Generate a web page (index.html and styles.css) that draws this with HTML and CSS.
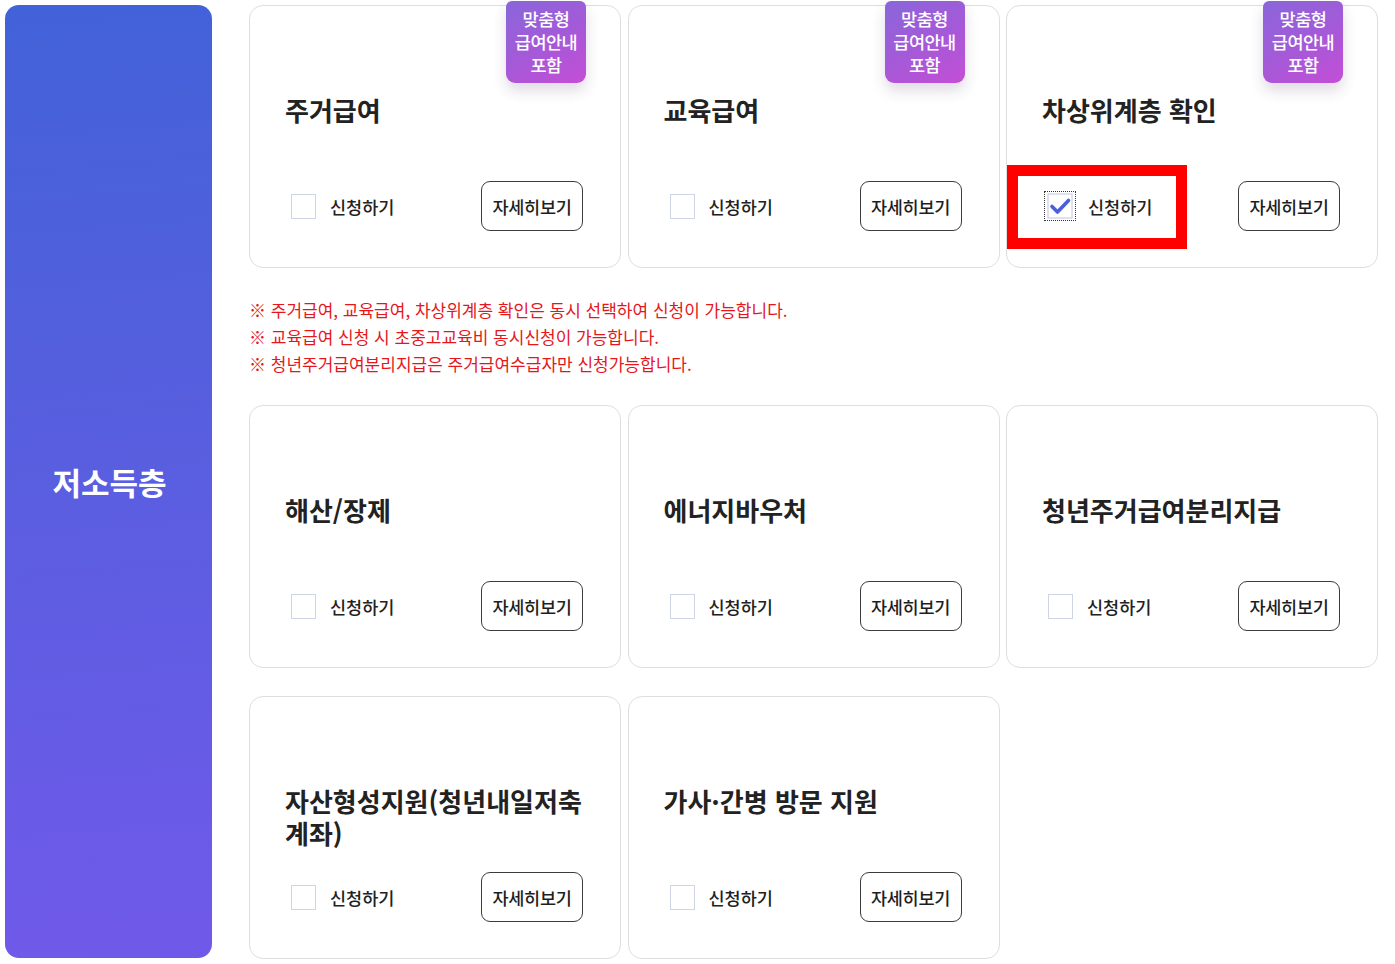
FILE: index.html
```html
<!DOCTYPE html>
<html lang="ko">
<head>
<meta charset="utf-8">
<title>저소득층</title>
<link rel="stylesheet" href="styles.css">
</head>
<body>
<div class="page">
  <aside class="side"><span class="side-label">저소득층</span></aside>
  <main class="main">
    <section class="grid">
      <div class="card">
        <div class="badge">맞춤형<br>급여안내<br>포함</div>
        <h3 class="title">주거급여</h3>
        <div class="actions">
          <label class="apply"><span class="box"></span><span class="apply-text">신청하기</span></label>
          <button class="more">자세히보기</button>
        </div>
      </div>
      <div class="card">
        <div class="badge">맞춤형<br>급여안내<br>포함</div>
        <h3 class="title">교육급여</h3>
        <div class="actions">
          <label class="apply"><span class="box"></span><span class="apply-text">신청하기</span></label>
          <button class="more">자세히보기</button>
        </div>
      </div>
      <div class="card">
        <div class="badge">맞춤형<br>급여안내<br>포함</div>
        <h3 class="title">차상위계층 확인</h3>
        <div class="actions">
          <label class="apply checked">
            <span class="box box-checked">
              <svg viewBox="0 0 32 30" width="32" height="30">
                <rect x="4" y="3" width="24" height="24" fill="#fff" stroke="#d4d8ec" stroke-width="1.5"/>
                <path d="M8 15.5 L13.5 21 L24.5 9.5" fill="none" stroke="#4a5fd8" stroke-width="3.6" stroke-linecap="round" stroke-linejoin="round"/>
              </svg>
            </span>
            <span class="apply-text">신청하기</span>
          </label>
          <button class="more">자세히보기</button>
        </div>
        <div class="highlight"></div>
      </div>
    </section>

    <div class="notes">
      <p>※ 주거급여, 교육급여, 차상위계층 확인은 동시 선택하여 신청이 가능합니다.</p>
      <p>※ 교육급여 신청 시 초중고교육비 동시신청이 가능합니다.</p>
      <p>※ 청년주거급여분리지급은 주거급여수급자만 신청가능합니다.</p>
    </div>

    <section class="grid grid-lower">
      <div class="card">
        <h3 class="title">해산/장제</h3>
        <div class="actions">
          <label class="apply"><span class="box"></span><span class="apply-text">신청하기</span></label>
          <button class="more">자세히보기</button>
        </div>
      </div>
      <div class="card">
        <h3 class="title">에너지바우처</h3>
        <div class="actions">
          <label class="apply"><span class="box"></span><span class="apply-text">신청하기</span></label>
          <button class="more">자세히보기</button>
        </div>
      </div>
      <div class="card">
        <h3 class="title">청년주거급여분리지급</h3>
        <div class="actions">
          <label class="apply"><span class="box"></span><span class="apply-text">신청하기</span></label>
          <button class="more">자세히보기</button>
        </div>
      </div>
      <div class="card">
        <h3 class="title">자산형성지원(청년내일저축 계좌)</h3>
        <div class="actions">
          <label class="apply"><span class="box"></span><span class="apply-text">신청하기</span></label>
          <button class="more">자세히보기</button>
        </div>
      </div>
      <div class="card">
        <h3 class="title">가사·간병 방문 지원</h3>
        <div class="actions">
          <label class="apply"><span class="box"></span><span class="apply-text">신청하기</span></label>
          <button class="more">자세히보기</button>
        </div>
      </div>
    </section>
  </main>
</div>
</body>
</html>
```
FILE: styles.css
```css
* { box-sizing: border-box; }
html, body {
  margin: 0;
  padding: 0;
  background: #fff;
}
body {
  font-family: "Noto Sans CJK KR", "Noto Sans", sans-serif;
  color: #222;
  overflow: hidden;
}
.page {
  display: flex;
  align-items: flex-start;
  padding: 5px 0 0 5px;
  height: 964px;
}
.side {
  width: 207px;
  height: 953px;
  border-radius: 14px;
  background: linear-gradient(175deg, #4262d8 0%, #5a5ee0 50%, #7059ea 100%);
  display: flex;
  align-items: center;
  justify-content: center;
  flex-shrink: 0;
}
.side-label {
  color: #fff;
  font-size: 31px;
  font-weight: 700;
  margin-left: 2px;
}
.main {
  margin-left: 37px;
  width: 1129px;
}
.grid {
  display: grid;
  grid-template-columns: repeat(3, 372px);
  column-gap: 6.5px;
  grid-auto-rows: 263px;
}
.grid-lower {
  row-gap: 28px;
  grid-auto-rows: 263px;
}
.card {
  position: relative;
  border: 1.5px solid #dedede;
  border-radius: 14px;
  background: #fff;
  display: flex;
  flex-direction: column;
  padding: 0 37px 36px 35px;
}
.badge {
  position: absolute;
  top: -5px;
  right: 34px;
  width: 80px;
  height: 82px;
  border-radius: 6px 6px 9px 9px;
  background: linear-gradient(150deg, #8a66da 0%, #a35ad8 50%, #c44ed6 100%);
  color: #fff;
  font-size: 17.5px;
  line-height: 23px;
  font-weight: 500;
  text-align: center;
  padding-top: 6px;
  letter-spacing: -0.5px;
  box-shadow: 0 8px 14px rgba(60, 40, 90, 0.16);
}
.title {
  margin: 0;
  padding-top: 88px;
  font-size: 26px;
  line-height: 32px;
  font-weight: 700;
  color: #222;
}
.actions {
  margin-top: auto;
  display: flex;
  align-items: center;
  justify-content: space-between;
}
.apply {
  display: flex;
  align-items: center;
  padding-left: 6px;
}
.box {
  width: 25px;
  height: 25px;
  border: 1.5px solid #cfd5e6;
  background: #fff;
  display: block;
}
.box-checked {
  border: 1.5px dotted #333;
  width: 32px;
  height: 30px;
  padding: 0;
}
.box-checked svg { display: block; margin: -1.5px; }
.checked { padding-left: 2px; }
.checked .apply-text { margin-left: 12px; }
.apply-text {
  margin-left: 14px;
  font-size: 17.5px;
  font-weight: 500;
  color: #222;
}
.more {
  width: 102px;
  height: 50px;
  border: 1.5px solid #3c3c3c;
  border-radius: 9px;
  background: #fff;
  font-family: inherit;
  font-size: 17.5px;
  font-weight: 500;
  color: #1e1e1e;
  padding: 0;
  letter-spacing: -0.3px;
}
.highlight {
  position: absolute;
  left: 0px;
  top: 159px;
  width: 180px;
  height: 84px;
  border: 11px solid #ff0000;
  pointer-events: none;
}
.notes {
  margin: 28px 0 28px 0;
}
.notes p {
  margin: 0;
  color: #e5161c;
  font-size: 17px;
  line-height: 27px;
}
```
